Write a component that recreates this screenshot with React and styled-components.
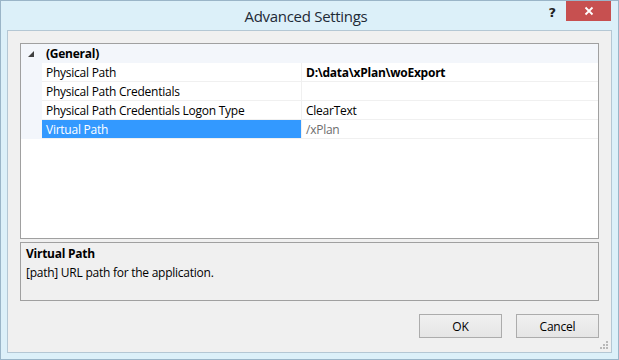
import React from "react";
import styled, { createGlobalStyle } from "styled-components";

const Global = createGlobalStyle`
  html, body { margin: 0; padding: 0; }
  body { width: 619px; height: 360px; overflow: hidden; font-family: "Open Sans", "Noto Sans", sans-serif; }
  * { box-sizing: border-box; }
`;

const Window = styled.div`
  width: 619px;
  height: 360px;
  border: 1px solid #9ab5c8;
  background: #dcf0f9;
  display: flex;
  flex-direction: column;
`;

const TitleBar = styled.div`
  height: 29px;
  display: grid;
  grid-template-columns: 1fr auto 1fr;
  align-items: start;
  padding-right: 7px;
`;

const Title = styled.div`
  grid-column: 2;
  font-size: 15px;
  line-height: 30px;
  color: #1e2a36;
  letter-spacing: -0.3px;
`;

const Controls = styled.div`
  grid-column: 3;
  justify-self: end;
  display: flex;
  align-items: start;
  gap: 10px;
`;

const Help = styled.div`
  font-family: "DejaVu Sans", sans-serif;
  font-weight: bold;
  font-size: 13px;
  line-height: 20px;
  color: #222;
  padding-top: 2px;
`;

const Close = styled.div`
  width: 45px;
  height: 20px;
  background: #c75050;
  display: flex;
  align-items: center;
  justify-content: center;
`;

const Client = styled.div`
  flex: 1;
  margin: 0 6px 6px 6px;
  border: 1px solid #b4c7d4;
  background: #f0f0f0;
  padding: 12px 12px 14px 12px;
  display: flex;
  flex-direction: column;
  position: relative;
`;

const Grid = styled.div`
  height: 196px;
  border: 1px solid #a0a0a0;
  background: #fff;
  display: flex;
  flex-direction: column;
`;

const Row = styled.div`
  height: 19px;
  display: grid;
  grid-template-columns: 21px 260px 1fr;
  font-size: 12px;
  line-height: 17px;
  letter-spacing: -0.25px;
  color: #000;
`;

const Gutter = styled.div`
  background: #f3f6fb;
  display: flex;
  align-items: center;
  padding-left: 7px;
`;

const HeaderCell = styled.div`
  grid-column: 2 / 4;
  background: #f3f6fb;
  font-weight: bold;
  padding: 1px 0 0 4px;
`;

const NameCell = styled.div`
  padding: 1px 0 0 4px;
  border-bottom: 1px solid #f0f0f0;
  border-right: 1px solid #f0f0f0;
  background: ${(p) => (p.selected ? "#3399ff" : "#fff")};
  color: ${(p) => (p.selected ? "#fff" : "#000")};
  white-space: nowrap;
`;

const ValueCell = styled.div`
  padding: 1px 0 0 4px;
  border-bottom: 1px solid #f0f0f0;
  font-weight: ${(p) => (p.bold ? "bold" : "normal")};
  color: ${(p) => (p.muted ? "#6d6d6d" : "#000")};
  white-space: nowrap;
`;

const Desc = styled.div`
  margin-top: 3px;
  height: 59px;
  border: 1px solid #a0a0a0;
  padding: 1px 5px;
  font-size: 12px;
  line-height: 19px;
  letter-spacing: -0.25px;
  color: #000;
`;

const DescTitle = styled.div`
  font-weight: bold;
`;

const Buttons = styled.div`
  margin-top: 13px;
  display: flex;
  justify-content: flex-end;
  gap: 14px;
`;

const Button = styled.div`
  width: 83px;
  height: 24px;
  border: 1px solid #acacac;
  background: linear-gradient(#f0f0f0, #e5e5e5);
  font-size: 12px;
  letter-spacing: -0.2px;
  display: flex;
  align-items: center;
  justify-content: center;
  color: #000;
`;

const Grip = styled.svg`
  position: absolute;
  right: 2px;
  bottom: 2px;
`;

const rows = [
  { name: "Physical Path", value: "D:\\data\\xPlan\\woExport", bold: true },
  { name: "Physical Path Credentials", value: "" },
  { name: "Physical Path Credentials Logon Type", value: "ClearText" },
  { name: "Virtual Path", value: "/xPlan", selected: true, muted: true },
];

export default function App() {
  return (
    <>
      <Global />
      <Window>
        <TitleBar>
          <Title>Advanced Settings</Title>
          <Controls>
            <Help>?</Help>
            <Close>
              <svg width="10" height="10" viewBox="0 0 10 10">
                <path d="M1.5 1.5 L8.5 8.5 M8.5 1.5 L1.5 8.5" stroke="#fff" strokeWidth="1.8" />
              </svg>
            </Close>
          </Controls>
        </TitleBar>
        <Client>
          <Grid>
            <Row>
              <Gutter>
                <svg width="6" height="6" viewBox="0 0 6 6">
                  <polygon points="6,0 6,6 0,6" fill="#404040" />
                </svg>
              </Gutter>
              <HeaderCell>(General)</HeaderCell>
            </Row>
            {rows.map((r) => (
              <Row key={r.name}>
                <Gutter />
                <NameCell selected={r.selected}>{r.name}</NameCell>
                <ValueCell bold={r.bold} muted={r.muted}>{r.value}</ValueCell>
              </Row>
            ))}
          </Grid>
          <Desc>
            <DescTitle>Virtual Path</DescTitle>
            <div>[path] URL path for the application.</div>
          </Desc>
          <Buttons>
            <Button>OK</Button>
            <Button>Cancel</Button>
          </Buttons>
          <Grip width="10" height="10" viewBox="0 0 10 10">
            <rect x="7" y="1" width="2" height="2" fill="#b8b8b8" />
            <rect x="4" y="4" width="2" height="2" fill="#b8b8b8" />
            <rect x="7" y="4" width="2" height="2" fill="#b8b8b8" />
            <rect x="1" y="7" width="2" height="2" fill="#b8b8b8" />
            <rect x="4" y="7" width="2" height="2" fill="#b8b8b8" />
            <rect x="7" y="7" width="2" height="2" fill="#b8b8b8" />
          </Grip>
        </Client>
      </Window>
    </>
  );
}
